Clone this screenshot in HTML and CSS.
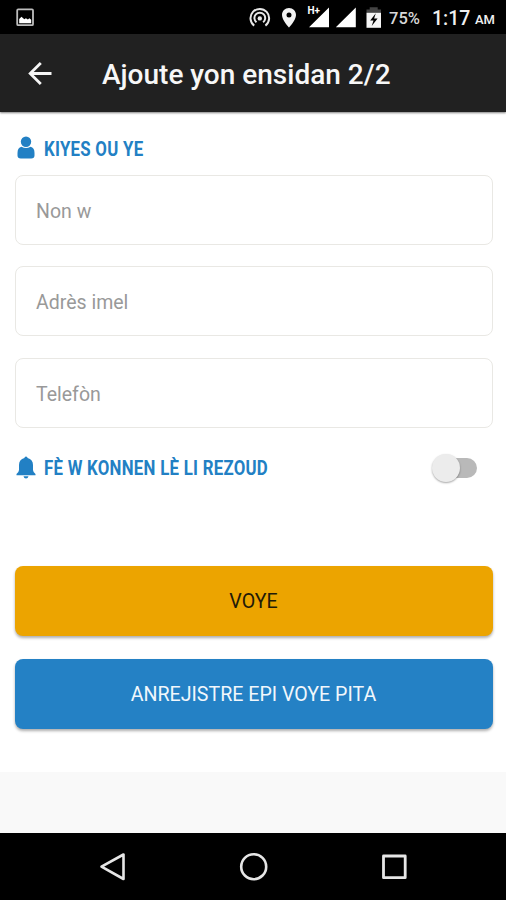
FILE: index.html
```html
<!DOCTYPE html>
<html lang="ht">
<head>
<meta charset="utf-8">
<title>Ajoute yon ensidan</title>
<link rel="stylesheet" href="styles.css">
</head>
<body>
<div class="status">
  <svg class="picture" width="20" height="20" viewBox="0 0 20 20"><rect x="2.200" y="2.400" width="15.800" height="15.800" rx="1" fill="none" stroke="#bdbdbd" stroke-width="1.800"/><path d="M4.200 16.300v-4.200l2.300-2.400 2.800 2.600 1.600-1.100 2 1.300 1.500-1.200 1.800 1.500v3.500z" fill="#fff"/></svg>
  <svg class="status-icons" width="148" height="34" viewBox="240 0 148 34">
    <g fill="none" stroke="#e8e8e8" stroke-width="2">
      <path d="M254.200 25.600a9.300 9.300 0 1 1 11.200 0"/>
      <path d="M256.500 22.300a5.400 5.400 0 1 1 6.600 0"/>
    </g>
    <circle cx="259.800" cy="18.400" r="2.200" fill="#e8e8e8"/>
    <path fill="#f2f2f2" fill-rule="evenodd" d="M289 8c-4 0-7 3.100-7 7 0 5.200 7 12.500 7 12.500s7-7.300 7-12.500c0-3.900-3-7-7-7zm0 4.500a2.500 2.500 0 1 1 0 5 2.500 2.500 0 0 1 0-5z"/>
    <path fill="#fff" d="M329 7.500V27.300H309zM355.800 7.500V27.300H335.800z"/>
    <path fill="#000" d="M306 4h15v11h-15z"/>
    <text class="network" x="307.500" y="14">H+</text>
    <path fill="#444" d="M366.500 9.500h3.200V7.300h8v2.200h3.300V13h-14.500z"/>
    <path fill="#f5f5f5" d="M366.500 12.800H381V27.800h-14.500z"/>
    <path fill="#000" d="M375.800 13.300l-5.600 7.200h3.300l-1.800 5.500 5.900-7.400h-3.500z"/>
  </svg>
  <span class="battery">75%</span>
  <span class="clock">1:17</span><span class="meridiem">AM</span>
</div>
<header class="appbar">
  <svg class="back" width="26" height="24" viewBox="0 0 26 24"><path d="M25.500 12.500H4M14.800 2L4.200 12.500l10.600 10.500" fill="none" stroke="#f5f5f5" stroke-width="2.800"/></svg>
  <h1>Ajoute yon ensidan 2/2</h1>
</header>
<main>
  <h2 class="identity">
    <svg width="18" height="24" viewBox="0 0 18 24"><circle cx="9" cy="5.800" r="5.200" fill="#2280c4"/><path d="M4.500 10.700Q9 13.500 13.500 10.700Q17.500 11.500 17.500 17v2.500q0 3-3.300 3H3.800Q.5 22.500 .5 19.500v-2.500q0-5.500 4-6.300z" fill="#2280c4"/></svg>
    <span>KIYES OU YE</span>
  </h2>
  <form>
    <div class="field">Non w</div>
    <div class="field">Adrès imel</div>
    <div class="field">Telefòn</div>
    <div class="notify">
      <h2>
        <svg width="18" height="24" viewBox="0 0 18 24"><path d="M9 .5q1.500 0 1.600 1.600Q16 3.500 16 9v5q.2 2.500 2.500 4v1.200H-.5V18q2.300-1.500 2.500-4V9q0-5.500 5.400-6.900Q7.500.5 9 .5zM6.500 20.200h5Q11 22.400 9 22.400T6.500 20.200z" fill="#2280c4"/></svg>
        <span>FÈ W KONNEN LÈ LI REZOUD</span>
      </h2>
      <span class="switch"></span>
    </div>
    <div class="button send">VOYE</div>
    <div class="button later">ANREJISTRE EPI VOYE PITA</div>
  </form>
</main>
<nav>
  <svg width="506" height="67" viewBox="0 833 506 67" fill="none" stroke="#e6e6e6" stroke-width="2.600" stroke-linejoin="round"><path d="M101.500 866.700L123.500 854.500V879z"/><circle cx="253.700" cy="866.700" r="12.500"/><rect x="383.500" y="856" width="21.700" height="21.700" stroke-width="2.800"/></svg>
</nav>
</body>
</html>
```
FILE: styles.css
```css
* { box-sizing: border-box; }
body {
  margin: 0;
  width: 506px;
  height: 900px;
  display: flex;
  flex-direction: column;
  overflow: hidden;
  background: #f9f9f9;
  font-family: Roboto, sans-serif;
}
svg { display: block; flex: none; overflow: visible; }
h1, h2 { margin: 0; }
.status {
  height: 34px;
  flex: none;
  display: flex;
  align-items: center;
  background: #000;
  color: #f0f0f0;
  white-space: nowrap;
}
.picture { margin-left: 15px; }
.status-icons { margin-left: 205px; }
.network { font-size: 10px; font-weight: 700; fill: #fff; }
.battery { width: 44px; padding: 3px 0 0 1px; font-size: 16.500px; line-height: 20px; font-weight: 500; color: #d8d8d8; }
.clock { width: 43px; padding-top: 3px; font-size: 19.500px; line-height: 22px; font-weight: 500; }
.meridiem { padding-top: 6px; font-size: 13px; line-height: 16px; font-weight: 500; }
.appbar {
  height: 78px;
  flex: none;
  display: flex;
  align-items: center;
  padding-left: 26px;
  background: #212121;
  box-shadow: 0 1px 2px rgba(0, 0, 0, .5);
  position: relative;
}
h1 {
  margin: 4px 0 0 50px;
  color: #f7f7f7;
  font-size: 28px;
  line-height: 32px;
  font-weight: 500;
  white-space: nowrap;
}
main { height: 660px; flex: none; padding: 24px 13.500px 0 14.500px; background: #fff; }
h2 {
  height: 24px;
  display: flex;
  align-items: center;
  gap: 9px;
  padding-left: 2.500px;
  color: #2280c4;
  font-size: 20px;
  line-height: 24px;
  font-weight: 700;
}
h2 span { display: block; padding-top: 1px; white-space: nowrap; letter-spacing: .32px; transform: scaleX(.84); transform-origin: left; }
form { padding-top: 15px; }
.field {
  height: 70px;
  margin-bottom: 21.400px;
  padding: 1px 20.500px 0;
  border: 1.500px solid #e9e8e4;
  border-radius: 8px;
  color: #999;
  font-size: 19.500px;
  line-height: 69px;
}
.notify { height: 24px; margin-top: 28px; display: flex; justify-content: space-between; align-items: center; }
.switch {
  position: relative;
  width: 32px;
  height: 20px;
  margin-right: 16px;
  border-radius: 10px;
  background: #b9b9b9;
}
.switch::before {
  content: "";
  position: absolute;
  left: -13px;
  top: -4px;
  width: 28px;
  height: 28px;
  border-radius: 50%;
  background: #ececec;
  box-shadow: 0 1px 2px rgba(0, 0, 0, .35);
}
.button {
  height: 70px;
  border-radius: 8px;
  text-align: center;
  font-size: 19.600px;
  line-height: 72px;
  box-shadow: 0 2px 3px rgba(0, 0, 0, .32);
}
.send { margin-top: 86.400px; background: #eca400; color: #221a08; }
.later { margin-top: 22.500px; background: #2481c5; color: #f1f7fc; }
nav { height: 67px; margin-top: auto; flex: none; background: #000; }
```
